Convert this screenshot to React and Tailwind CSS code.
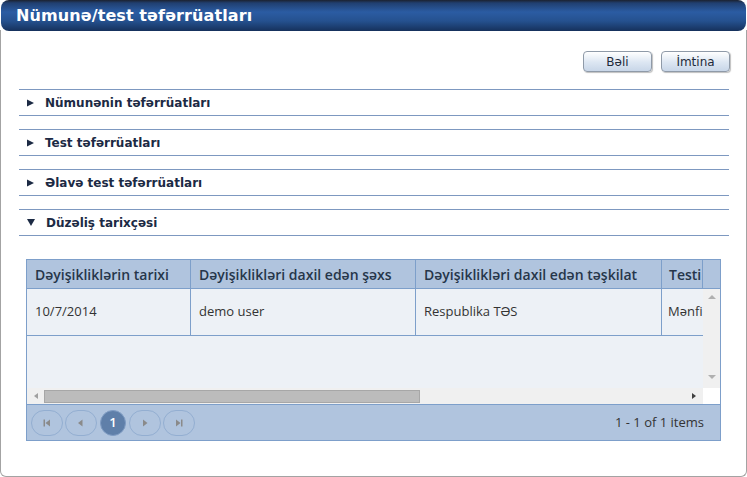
import React from "react";

const sections = ["Nümunənin təfərrüatları", "Test təfərrüatları", "Əlavə test təfərrüatları"];

function PagerButton({ children, active }) {
  if (active) {
    return (
      <div className="w-[26px] h-[26px] rounded-full bg-[#5f7fa9] border border-[#7f9cc3] flex items-center justify-center text-white text-[13px] font-semibold">
        {children}
      </div>
    );
  }
  return (
    <div className="w-[32px] h-[26px] rounded-[13px] border border-[#93aed1] flex items-center justify-center">
      {children}
    </div>
  );
}

function Tri({ dir }) {
  const paths = {
    left: "M6.5 1.5 L2 5 L6.5 8.5 Z",
    right: "M3 1.5 L7.5 5 L3 8.5 Z",
    first: "M1.5 1.5 H3 V8.5 H1.5 Z M8 1.5 L3.5 5 L8 8.5 Z",
    last: "M2 1.5 L6.5 5 L2 8.5 Z M7 1.5 H8.5 V8.5 H7 Z",
  };
  return (
    <svg width="10" height="10" viewBox="0 0 10 10">
      <path d={paths[dir]} fill="#8a8a8a" />
    </svg>
  );
}

export default function App() {
  const grid = "font-['Open_Sans',sans-serif]";
  return (
    <div className="w-[747px] h-[477px] flex flex-col bg-white font-['DejaVu_Sans',sans-serif]">
      <div className="h-[31px] mx-[1px] rounded-[8px] flex items-center pl-[15px] bg-[linear-gradient(to_bottom,#1c2230_0px,#203f70_3px,#2b5ca3_12px,#25518f_21px,#16315c_31px)]">
        <span className="text-white font-bold text-[16px] tracking-[0.1px]">Nümunə/test təfərrüatları</span>
      </div>
      <div className="flex-1 border-l border-r border-b border-[#a3a3a3] rounded-b-[6px] -mt-[1px] pt-[21px] pl-[18px] pr-[16px]">
        <div className="flex justify-end gap-[9px]">
          {["Bəli", "İmtina"].map((t) => (
            <div
              key={t}
              className="w-[69px] h-[21px] rounded-[4px] border border-[#8f9aa8] bg-[linear-gradient(to_bottom,#ffffff,#dce6f2_55%,#c8d6e8)] shadow-[1px_1px_1px_rgba(0,0,0,0.25)] flex items-center justify-center text-[12px] text-[#1e2a3a]"
            >
              {t}
            </div>
          ))}
        </div>
        <div className="mt-[17px] w-[710px]">
          {sections.map((s) => (
            <div key={s} className="h-[27px] border-t border-b border-[#7d98c0] flex items-center pl-[8px] mb-[13px]">
              <svg width="7" height="8" viewBox="0 0 7 8" className="mr-[11px]">
                <path d="M0 0.5 L7 4 L0 7.5 Z" fill="#1c2a44" />
              </svg>
              <span className="text-[12px] font-bold text-[#1c2a44]">{s}</span>
            </div>
          ))}
          <div className="h-[27px] border-t border-b border-[#7d98c0] flex items-center pl-[8px]">
            <svg width="8" height="7" viewBox="0 0 8 7" className="mr-[11px]">
              <path d="M0 0 L8 0 L4 7 Z" fill="#1c2a44" />
            </svg>
            <span className="text-[12px] font-bold text-[#1c2a44]">Düzəliş tarixçəsi</span>
          </div>
        </div>

        <div className={`ml-[7px] mt-[23px] w-[695px] border border-[#7d9fca] ${grid}`}>
          <div className="flex h-[29px] bg-[#b0c4de] border-b border-[#7d9fca] text-[14px] font-semibold text-[#26364a] overflow-hidden">
            <div className="w-[164px] shrink-0 border-r border-[#7d9fca] flex items-center pl-[8px]">Dəyişikliklərin tarixi</div>
            <div className="w-[225px] shrink-0 border-r border-[#7d9fca] flex items-center pl-[8px]">Dəyişiklikləri daxil edən şəxs</div>
            <div className="w-[246px] shrink-0 border-r border-[#7d9fca] flex items-center pl-[8px]">Dəyişiklikləri daxil edən təşkilat</div>
            <div className="w-[41px] shrink-0 border-r border-[#7d9fca] flex items-center pl-[7px] overflow-hidden whitespace-nowrap">Testi</div>
            <div className="flex-1"></div>
          </div>
          <div className="flex h-[115px] bg-[#edf1f6]">
            <div className="w-[676px] shrink-0 flex flex-col">
              <div className="flex h-[47px] border-b border-[#7d9fca] text-[13px] text-[#333]">
                <div className="w-[164px] shrink-0 border-r border-[#7d9fca] flex items-center pl-[8px]">10/7/2014</div>
                <div className="w-[225px] shrink-0 border-r border-[#7d9fca] flex items-center pl-[8px]">demo user</div>
                <div className="w-[246px] shrink-0 border-r border-[#7d9fca] flex items-center pl-[8px]">Respublika TƏS</div>
                <div className="w-[41px] shrink-0 flex items-center pl-[6px] whitespace-nowrap">Mənfi</div>
              </div>
              <div className="flex-1"></div>
              <div className="h-[16px] bg-[#f0f0f0] flex items-center">
                <svg width="10" height="10" viewBox="0 0 10 10" className="ml-[4px]">
                  <path d="M7 2 L3 5 L7 8 Z" fill="#a0a0a0" />
                </svg>
                <div className="ml-[3px] w-[376px] h-[13px] bg-[#bcbcbc] border border-[#a7a7a7]"></div>
                <div className="flex-1"></div>
                <svg width="10" height="10" viewBox="0 0 10 10" className="mr-[4px]">
                  <path d="M3 2 L7 5 L3 8 Z" fill="#404040" />
                </svg>
              </div>
            </div>
            <div className="flex-1 flex flex-col">
              <div className="flex-1 bg-[#f0f0f0] flex flex-col items-center justify-between pt-[5px] pb-[8px]">
                <svg width="10" height="6" viewBox="0 0 10 6">
                  <path d="M1 5 L5 1 L9 5 Z" fill="#b0b0b0" />
                </svg>
                <svg width="10" height="6" viewBox="0 0 10 6">
                  <path d="M1 1 L5 5 L9 1 Z" fill="#b0b0b0" />
                </svg>
              </div>
              <div className="h-[16px] bg-white"></div>
            </div>
          </div>
          <div className="h-[36px] bg-[#b0c4de] border-t border-[#7d9fca] flex items-center pl-[4px] pr-[16px]">
            <div className="flex items-center gap-[2px]">
              <PagerButton><Tri dir="first" /></PagerButton>
              <PagerButton><Tri dir="left" /></PagerButton>
              <div className="mx-[1px]"><PagerButton active>1</PagerButton></div>
              <PagerButton><Tri dir="right" /></PagerButton>
              <PagerButton><Tri dir="last" /></PagerButton>
            </div>
            <div className="flex-1"></div>
            <span className="text-[13px] text-[#333]">1 - 1 of 1 items</span>
          </div>
        </div>
      </div>
    </div>
  );
}
